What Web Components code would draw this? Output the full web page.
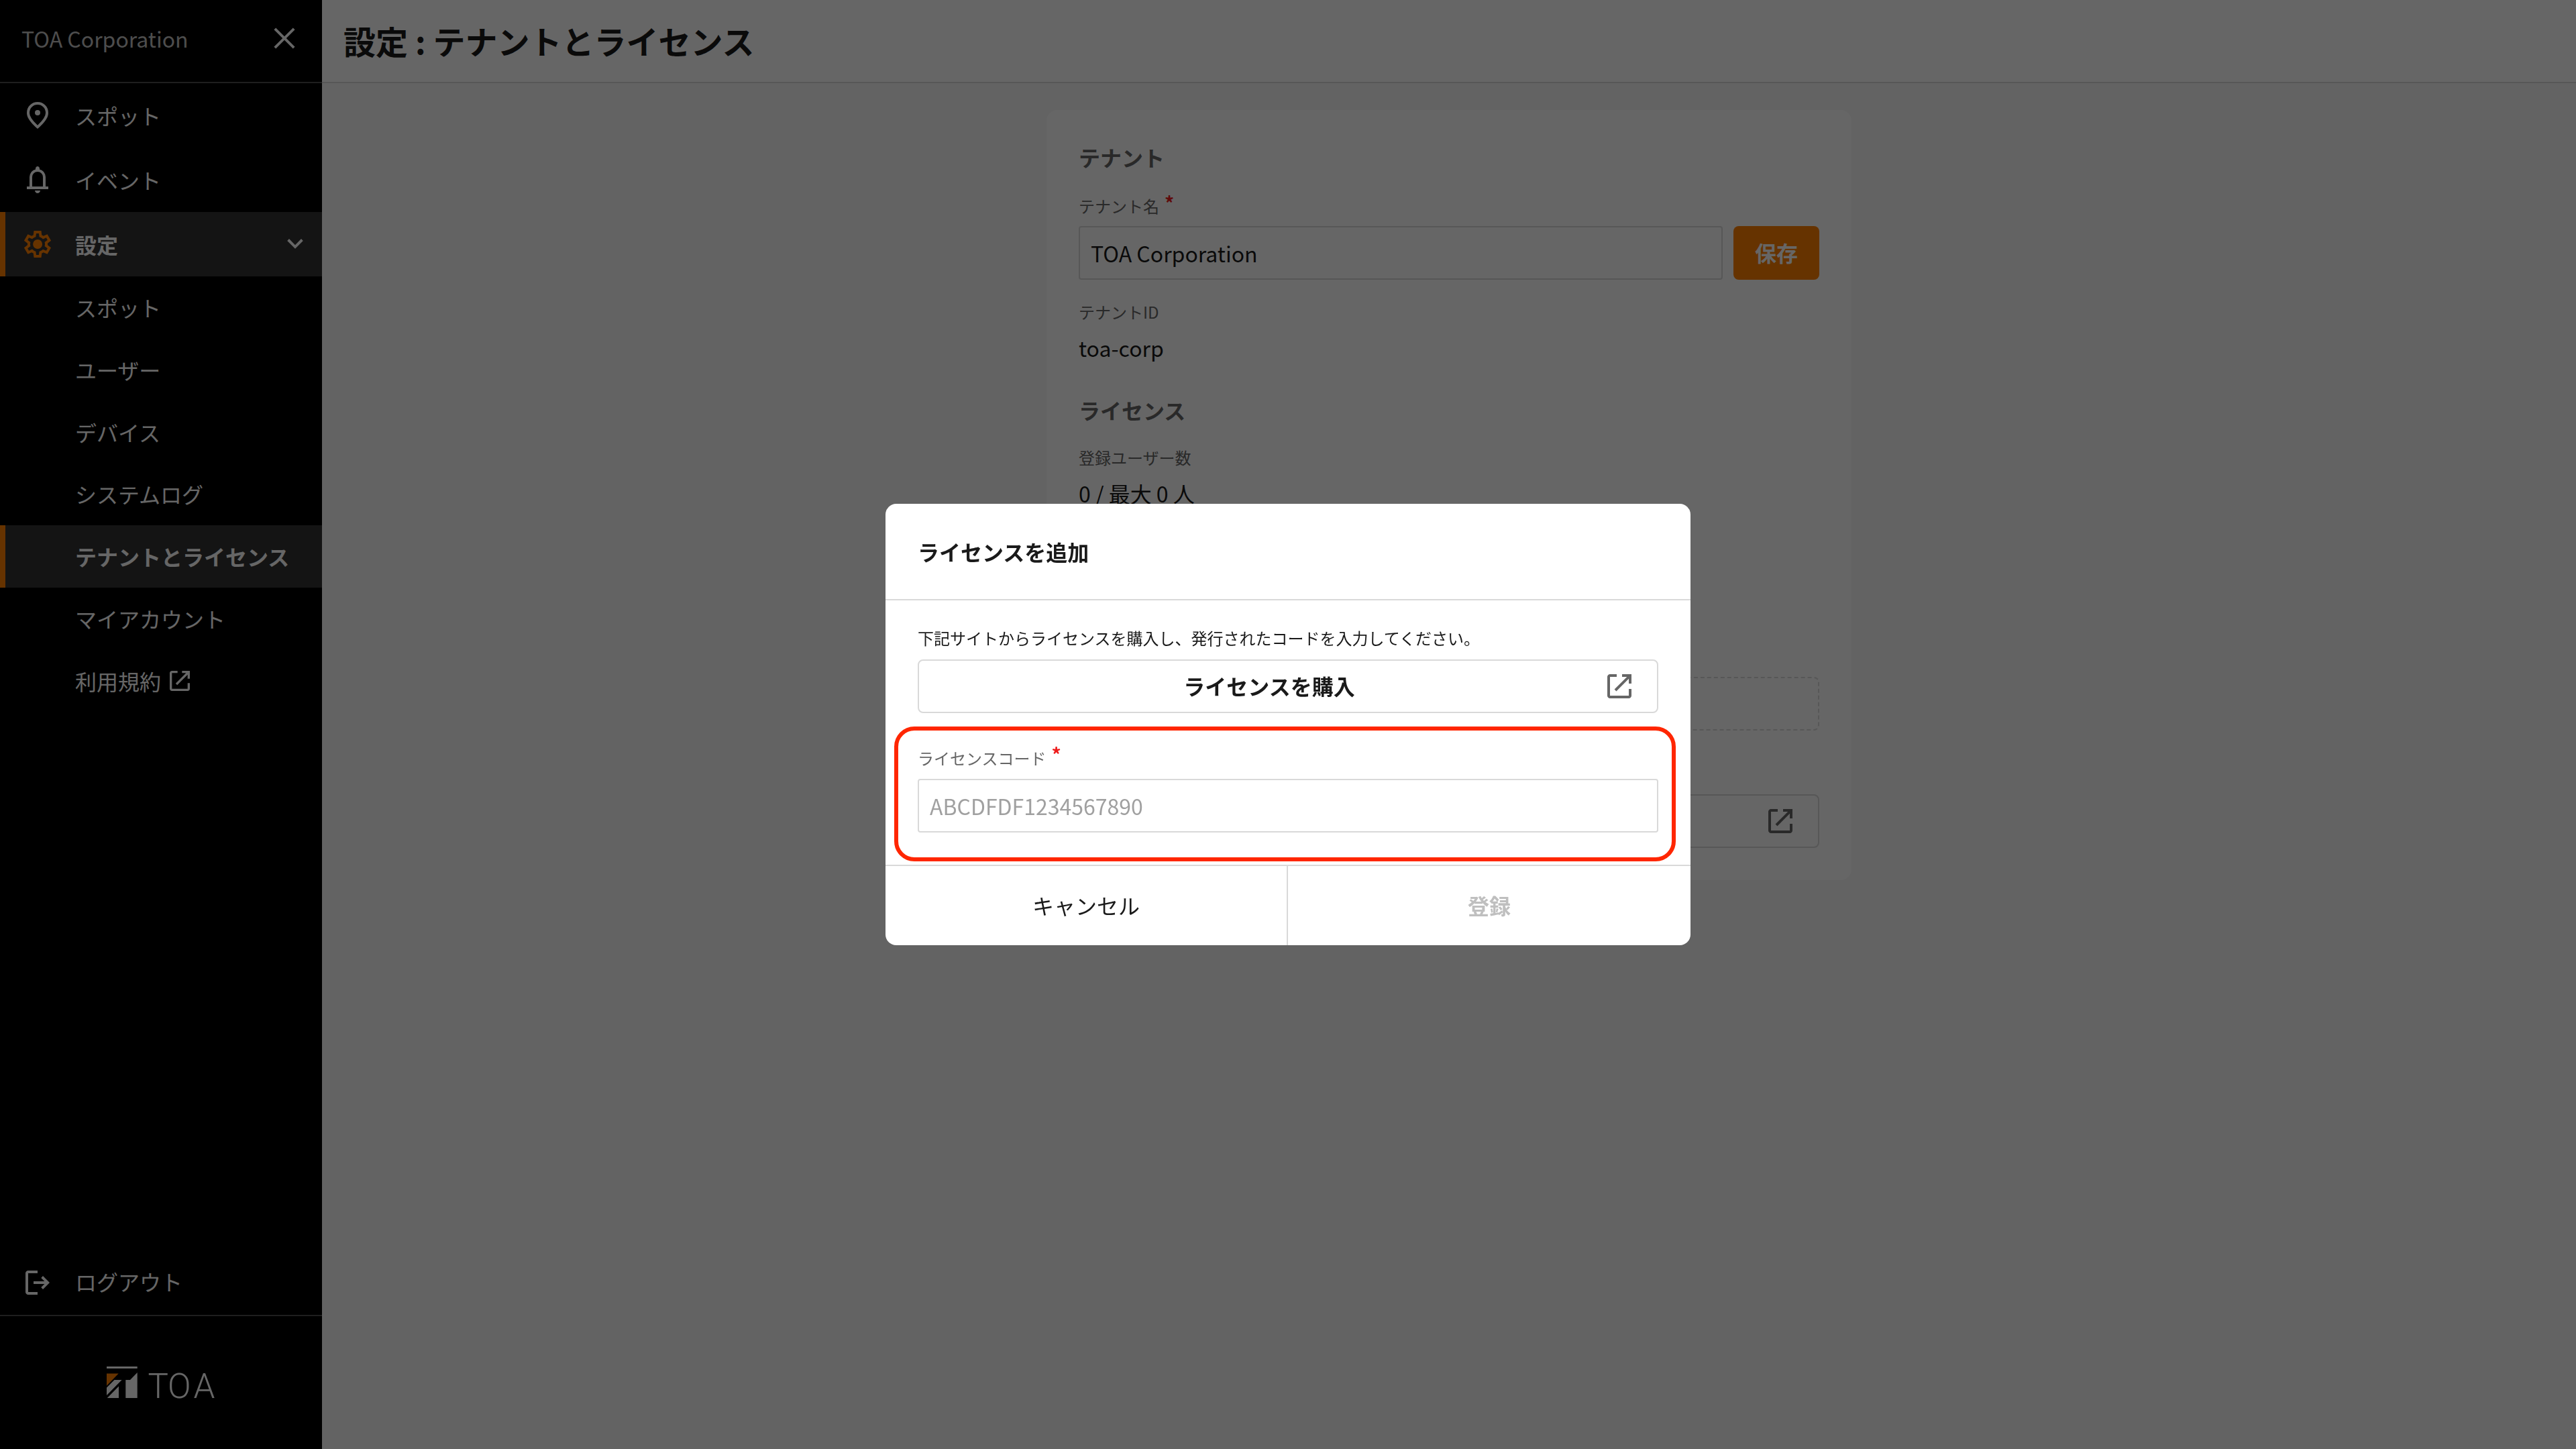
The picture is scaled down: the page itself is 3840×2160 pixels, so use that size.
<!DOCTYPE html>
<html lang="ja">
<head>
<meta charset="utf-8">
<title>設定 : テナントとライセンス</title>
<style>
    html, body {
        margin: 0;
        height: 100%;
    }
    body {
        --accent: #ff8000;
        --line: #d9d9d9;
        --text: #1a1a1a;
        --sub: #666;
        font-family: "Noto Sans CJK JP", sans-serif;
        font-size: 32px;
        line-height: 1.4;
        color: var(--text);
        overflow: hidden;
    }
</style>
</head>
<body>
<app-shell>
    <side-nav slot="nav" tenant="TOA Corporation">
        <nav-item icon="spot">スポット</nav-item>
        <nav-item icon="bell">イベント</nav-item>
        <nav-item icon="gear" active expanded>設定</nav-item>
        <nav-item sub>スポット</nav-item>
        <nav-item sub>ユーザー</nav-item>
        <nav-item sub>デバイス</nav-item>
        <nav-item sub>システムログ</nav-item>
        <nav-item sub active>テナントとライセンス</nav-item>
        <nav-item sub>マイアカウント</nav-item>
        <nav-item sub external>利用規約</nav-item>
        <nav-item slot="bottom" icon="logout">ログアウト</nav-item>
    </side-nav>
    <page-header slot="header">設定 : テナントとライセンス</page-header>
    <settings-card></settings-card>
    <license-dialog slot="dialog"></license-dialog>
</app-shell>

<script>
const ICONS = {
    close: '<path d="M5.6 19.8 4.2 18.4 10.6 12 4.2 5.6 5.6 4.2 12 10.6 18.4 4.2 19.8 5.6 13.4 12 19.8 18.4 18.4 19.8 12 13.4z"/>',
    spot: '<path d="M12 19.35q3.05-2.8 4.525-5.087T18 10.2q0-2.725-1.737-4.462T12 4T7.738 5.738T6 10.2q0 1.775 1.475 4.063T12 19.35M12 22q-4.025-3.425-6.012-6.362T4 10.2q0-3.75 2.413-5.975T12 2t5.588 2.225T20 10.2q0 2.5-1.987 5.438T12 22"/><circle cx="12" cy="10" r="2"/>',
    bell: '<path d="M4 19v-2h2v-7q0-2.075 1.25-3.687T10.5 4.2v-.7q0-.625.438-1.062T12 2t1.063.438T13.5 3.5v.7q2 .5 3.25 2.113T18 10v7h2v2zm8 3q-.825 0-1.412-.587T10 20h4q0 .825-.587 1.413T12 22m-4-5h8v-7q0-1.65-1.175-2.825T12 6T9.175 7.175T8 10z"/>',
    gear: '<path d="m9.25 22l-.4-3.2q-.325-.125-.612-.3t-.563-.375L4.7 19.375l-2.75-4.75l2.575-1.95Q4.5 12.5 4.5 12.338v-.675q0-.163.025-.338L1.95 9.375l2.75-4.75l2.975 1.25q.275-.2.575-.375t.6-.3l.4-3.2h5.5l.4 3.2q.325.125.613.3t.562.375l2.975-1.25l2.75 4.75l-2.575 1.95q.025.175.025.338v.674q0 .163-.05.338l2.575 1.95l-2.75 4.75l-2.95-1.25q-.275.2-.575.375t-.6.3l-.4 3.2zM11 20h1.975l.35-2.65q.775-.2 1.438-.587t1.212-.938l2.475 1.025l.975-1.7l-2.15-1.625q.125-.35.175-.737T17.5 12t-.05-.787t-.175-.738l2.15-1.625l-.975-1.7l-2.475 1.05q-.55-.575-1.212-.962t-1.438-.588L13 4h-1.975l-.35 2.65q-.775.2-1.437.588t-1.213.937L5.55 7.15l-.975 1.7l2.15 1.6q-.125.375-.175.75t-.05.8q0 .4.05.775t.175.75l-2.15 1.625l.975 1.7l2.475-1.05q.55.575 1.213.963t1.437.587z"/><circle cx="12.05" cy="12" r="3.5"/>',
    chevron: '<path d="M12 15.4 6.1 9.45 7.5 8.05 12 12.6 16.5 8.05 17.9 9.45z"/>',
    logout: '<path d="M5 21q-.825 0-1.412-.587T3 19V5q0-.825.588-1.412T5 3h7v2H5v14h7v2zm11-4-1.375-1.45 2.55-2.55H9v-2h8.175l-2.55-2.55L16 7l5 5z"/>',
    external: '<path d="M5 21q-.825 0-1.412-.587T3 19V5q0-.825.588-1.412T5 3h5v2H5v14h14v-5h2v5q0 .825-.587 1.413T19 21zM9.7 15.7 8.3 14.3 17.6 5H14V3h7v7h-2V6.4z"/>'
};

class BaseElement extends HTMLElement {
    connectedCallback() {
        if (this.shadowRoot) return;
        this.attachShadow({ mode: 'open' });
        this.shadowRoot.innerHTML = this.render();
    }
}

class AppIcon extends BaseElement {
    render() {
        return `
            <style>
                :host { display: block; width: 48px; height: 48px; flex: none; }
                svg { display: block; width: 100%; height: 100%; fill: currentColor; }
            </style>
            <svg viewBox="0 0 24 24">${ICONS[this.getAttribute('name')]}</svg>
        `;
    }
}

class AppShell extends BaseElement {
    render() {
        return `
            <style>
                :host { display: grid; grid-template-columns: 480px 1fr; height: 100vh; background: #f7f7f7; }
                .main { display: flex; flex-direction: column; min-width: 0; }
                .content { display: flex; justify-content: center; padding-top: 40px; }
            </style>
            <slot name="nav"></slot>
            <div class="main">
                <slot name="header"></slot>
                <div class="content"><slot></slot></div>
            </div>
            <slot name="dialog"></slot>
        `;
    }
}

class SideNav extends BaseElement {
    render() {
        return `
            <style>
                :host { display: flex; flex-direction: column; background: #000; color: #fff; }
                header {
                    display: flex; align-items: center; justify-content: space-between;
                    box-sizing: border-box; height: 124px; padding: 0 32px 8px;
                    border-bottom: 2px solid #4d4d4d;
                }
                header span { color: #c0c0c0; }
                nav { flex: 1; }
                footer {
                    display: flex; align-items: center; justify-content: center;
                    box-sizing: border-box; height: 200px;
                    border-top: 2px solid #4d4d4d;
                }
            </style>
            <header><span>${this.getAttribute('tenant')}</span><app-icon name="close"></app-icon></header>
            <nav><slot></slot></nav>
            <slot name="bottom"></slot>
            <footer><toa-logo></toa-logo></footer>
        `;
    }
}

class NavItem extends BaseElement {
    render() {
        const icon = this.getAttribute('icon');
        return `
            <style>
                :host {
                    display: flex; align-items: center; box-sizing: border-box;
                    height: 96px; padding: 0 16px 0 24px;
                    border-left: 8px solid transparent;
                }
                :host([sub]) { height: 92.8px; padding-left: 104px; }
                :host([active]) { background: #333; border-left-color: var(--accent); font-weight: 700; }
                :host([slot="bottom"]) span { margin-bottom: 3px; }
                .icon { margin-right: 32px; }
                :host([active]) .icon { color: var(--accent); }
                .chevron { margin-left: auto; }
                .external { width: 40px; height: 40px; margin-left: 8px; }
            </style>
            ${icon ? `<app-icon class="icon" name="${icon}"></app-icon>` : ''}
            <span><slot></slot></span>
            ${this.hasAttribute('expanded') ? '<app-icon class="chevron" name="chevron"></app-icon>' : ''}
            ${this.hasAttribute('external') ? '<app-icon class="external" name="external"></app-icon>' : ''}
        `;
    }
}

class ToaLogo extends BaseElement {
    render() {
        return `
            <style>
                :host { display: block; }
                svg { display: block; fill: #fff; overflow: visible; }
                text { font-family: Roboto, sans-serif; font-weight: 300; font-size: 51px; }
            </style>
            <svg width="163" height="48" viewBox="0 0 163 48">
                <path d="M0 0H45.7V3H0z"/>
                <path d="M0 10.5H17.7L0 28.7z" fill="#ff8000"/>
                <path d="M11.5 20H22.6L0 43V31.5zM18 29.5V47H.8zM28.3 20H35L45.7 9V47H28.3z"/>
                <text y="47" x="61.5 91 129.5">TOA</text>
            </svg>
        `;
    }
}

class PageHeader extends BaseElement {
    render() {
        return `
            <style>
                :host {
                    display: flex; align-items: center; box-sizing: border-box;
                    height: 124px; padding: 0 32px;
                    background: #fff; border-bottom: 2px solid var(--line);
                    font-size: 48px; font-weight: 700;
                }
            </style>
            <slot></slot>
        `;
    }
}

class FieldLabel extends BaseElement {
    render() {
        return `
            <style>
                :host {
                    display: flex; align-items: center; height: 33.6px;
                    font-size: 24px; color: var(--sub);
                }
                :host([required]) { height: 36.8px; margin-bottom: 11.2px; }
                b { color: #ee1c1c; font-size: 28px; margin: -10px 0 0 8px; }
            </style>
            <slot></slot>${this.hasAttribute('required') ? '<b>*</b>' : ''}
        `;
    }
}

class TextField extends BaseElement {
    render() {
        return `
            <style>
                :host {
                    display: flex; align-items: center; box-sizing: border-box;
                    height: 80px; padding: 1px 16px 0;
                    border: 2px solid var(--line); border-radius: 4px; background: #fff;
                }
                :host([placeholder]) { color: #a0a0a0; padding-top: 0; }
            </style>
            <slot></slot>${this.getAttribute('placeholder') || ''}
        `;
    }
}

class LinkButton extends BaseElement {
    render() {
        return `
            <style>
                :host {
                    display: flex; align-items: center; gap: 8px; box-sizing: border-box;
                    height: 80px; padding: 0 32px;
                    border: 2px solid var(--line); border-radius: 8px;
                    font-weight: 700;
                }
                span { flex: 1; margin-bottom: 2px; text-align: center; }
                app-icon { color: var(--sub); }
            </style>
            <span><slot></slot></span>
            <app-icon name="external"></app-icon>
        `;
    }
}

class SettingsCard extends BaseElement {
    render() {
        return `
            <style>
                :host {
                    display: block; box-sizing: border-box;
                    width: 1200px; height: 1148px; padding: 48px;
                    background: #fff; border-radius: 16px;
                }
                h2 { margin: 0 0 32px; font-size: 32px; font-weight: 700; color: var(--sub); }
                p { margin: 14px 0 0; }
                .row { display: flex; gap: 16px; margin-bottom: 31.4px; }
                .row text-field { flex: 1; }
                .save {
                    display: flex; align-items: center; justify-content: center;
                    width: 128px; height: 80px; border-radius: 8px;
                    background: var(--accent); color: #fff; font-weight: 700;
                }
                .license { margin-top: 48px; }
                .empty {
                    box-sizing: border-box; height: 80px; margin: 251.4px 0 95px;
                    border: 2px dashed var(--line); border-radius: 8px;
                }
            </style>
            <h2>テナント</h2>
            <field-label required>テナント名</field-label>
            <div class="row">
                <text-field>TOA Corporation</text-field>
                <div class="save">保存</div>
            </div>
            <field-label>テナントID</field-label>
            <p>toa-corp</p>
            <h2 class="license">ライセンス</h2>
            <field-label>登録ユーザー数</field-label>
            <p>0 / 最大 0 人</p>
            <div class="empty"></div>
            <link-button></link-button>
        `;
    }
}

class LicenseDialog extends BaseElement {
    render() {
        return `
            <style>
                :host {
                    position: fixed; inset: 0;
                    display: flex; align-items: center; justify-content: center;
                    background: rgba(0, 0, 0, 0.6);
                }
                .dialog {
                    position: relative; display: flex; flex-direction: column;
                    width: 1200px; height: 658px;
                    background: #fff; border-radius: 16px; overflow: hidden;
                }
                header {
                    display: flex; align-items: center; height: 142px; padding: 0 48px;
                    border-bottom: 2px solid var(--line); font-weight: 700;
                }
                .body { flex: 1; padding: 39px 48px 0; }
                .note { margin: 0 0 15.4px; font-size: 24px; }
                link-button { margin-bottom: 48px; }
                field-label { margin-bottom: 13.2px; }
                footer { display: grid; grid-template-columns: 1fr 1fr; height: 118px; border-top: 2px solid var(--line); }
                footer div { display: flex; align-items: center; justify-content: center; padding-bottom: 2px; }
                .cancel { border-right: 2px solid var(--line); }
                .submit { color: #bfbfbf; font-weight: 700; }
                /* frame around the code field */
                .highlight {
                    position: absolute; left: 12.5px; top: 332px;
                    box-sizing: border-box; width: 1165px; height: 201px;
                    border: 6px solid #ff2600; border-radius: 30px;
                }
            </style>
            <div class="dialog">
                <header>ライセンスを追加</header>
                <div class="body">
                    <p class="note">下記サイトからライセンスを購入し、発行されたコードを入力してください。</p>
                    <link-button>ライセンスを購入</link-button>
                    <field-label required>ライセンスコード</field-label>
                    <text-field placeholder="ABCDFDF1234567890"></text-field>
                </div>
                <footer>
                    <div class="cancel">キャンセル</div>
                    <div class="submit">登録</div>
                </footer>
                <div class="highlight"></div>
            </div>
        `;
    }
}

customElements.define('app-icon', AppIcon);
customElements.define('toa-logo', ToaLogo);
customElements.define('app-shell', AppShell);
customElements.define('side-nav', SideNav);
customElements.define('nav-item', NavItem);
customElements.define('page-header', PageHeader);
customElements.define('field-label', FieldLabel);
customElements.define('text-field', TextField);
customElements.define('link-button', LinkButton);
customElements.define('settings-card', SettingsCard);
customElements.define('license-dialog', LicenseDialog);
</script>
</body>
</html>
